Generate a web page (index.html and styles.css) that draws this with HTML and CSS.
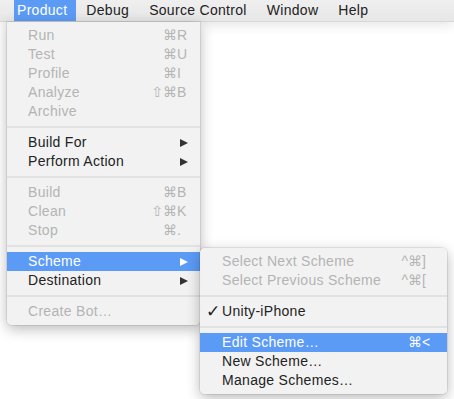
FILE: index.html
```html
<!DOCTYPE html>
<html lang="en">
<head>
    <meta charset="UTF-8">
    <title>Xcode Product Menu</title>
    <link rel="stylesheet" href="styles.css">
</head>
<body>
    <div class="menubar">
        <span class="bar-item first active">Product</span>
        <span class="bar-item">Debug</span>
        <span class="bar-item">Source Control</span>
        <span class="bar-item">Window</span>
        <span class="bar-item">Help</span>
    </div>

<div class="menus">
    <div class="menu main-menu">
        <div class="item disabled"><span class="label">Run</span><span class="keys"><span class="mods">⌘</span><span class="key">R</span></span></div>
        <div class="item disabled"><span class="label">Test</span><span class="keys"><span class="mods">⌘</span><span class="key">U</span></span></div>
        <div class="item disabled"><span class="label">Profile</span><span class="keys"><span class="mods">⌘</span><span class="key">I</span></span></div>
        <div class="item disabled"><span class="label">Analyze</span><span class="keys"><span class="mods">⇧⌘</span><span class="key">B</span></span></div>
        <div class="item disabled"><span class="label">Archive</span></div>
        <div class="separator"></div>
        <div class="item"><span class="label">Build For</span><span class="arrow"></span></div>
        <div class="item"><span class="label">Perform Action</span><span class="arrow"></span></div>
        <div class="separator"></div>
        <div class="item disabled"><span class="label">Build</span><span class="keys"><span class="mods">⌘</span><span class="key">B</span></span></div>
        <div class="item disabled"><span class="label">Clean</span><span class="keys"><span class="mods">⇧⌘</span><span class="key">K</span></span></div>
        <div class="item disabled"><span class="label">Stop</span><span class="keys"><span class="mods">⌘</span><span class="key">.</span></span></div>
        <div class="separator"></div>
        <div class="item selected"><span class="label">Scheme</span><span class="arrow"></span></div>
        <div class="item"><span class="label">Destination</span><span class="arrow"></span></div>
        <div class="separator"></div>
        <div class="item disabled"><span class="label">Create Bot…</span></div>
    </div>

    <div class="menu submenu">
        <div class="item disabled"><span class="label">Select Next Scheme</span><span class="keys"><span class="mods">^⌘</span><span class="key">]</span></span></div>
        <div class="item disabled"><span class="label">Select Previous Scheme</span><span class="keys"><span class="mods">^⌘</span><span class="key">[</span></span></div>
        <div class="separator"></div>
        <div class="item"><span class="check">✓</span><span class="label">Unity-iPhone</span></div>
        <div class="separator"></div>
        <div class="item selected"><span class="label">Edit Scheme…</span><span class="keys"><span class="mods">⌘</span><span class="key">&lt;</span></span></div>
        <div class="item"><span class="label">New Scheme…</span></div>
        <div class="item"><span class="label">Manage Schemes…</span></div>
    </div>
</div>

</body>
</html>
```

FILE: styles.css
```css
body {
    margin: 0;
    height: 399px;
    overflow: hidden;
    background: white;
    font-family: "Liberation Sans", Arial, "DejaVu Sans", sans-serif;
    font-size: 14px;
    letter-spacing: 0.3px;
    color: #222;
}
.menubar {
    display: flex;
    height: 22px;
    line-height: 21px;
    padding-left: 14px;
    background: linear-gradient(180deg, #efefef, #e7e7e7);
    border-bottom: 1px solid #d8d8d8;
    box-sizing: border-box;
    box-shadow: 0 2px 14px rgba(0, 0, 0, 0.12);
    position: relative;
    z-index: 1;
}
.bar-item {
    padding: 0 10px;
}
.bar-item.first {
    padding-left: 3px;
    padding-right: 9px;
}
.bar-item.active {
    background: #5b9bf6;
    color: white;
}
.menus {
    display: flex;
    align-items: flex-start;
    padding-left: 7px;
    position: relative;
    z-index: 2;
}
.menu {
    background: rgba(242, 242, 242, 0.98);
    padding: 4px 0;
    box-shadow: 0 4px 14px rgba(0, 0, 0, 0.28), 0 0 0 1px rgba(0, 0, 0, 0.08);
}
.main-menu {
    width: 193px;
    border-radius: 0 0 5px 5px;
}
.submenu {
    width: 247px;
    margin-top: 226px;
    border-radius: 5px;
    position: relative;
    z-index: 3;
}
.item {
    display: flex;
    align-items: center;
    height: 19px;
    line-height: 19px;
    padding: 0 12px 0 21px;
    position: relative;
}
.submenu .item {
    padding: 0 14px 0 22px;
}
.item .label {
    flex: 1;
    white-space: nowrap;
}
.item.disabled {
    color: #b4b4b4;
}
.item.selected {
    background: #5b9bf6;
    color: white;
}
.keys {
    display: flex;
    letter-spacing: 0;
}
.mods {
    text-align: right;
}
.key {
    width: 11px;
}
.check {
    position: absolute;
    left: 6px;
    top: 0;
    font-family: "DejaVu Sans", sans-serif;
    font-size: 17px;
}
.arrow {
    width: 0;
    height: 0;
    border-left: 8px solid #333;
    border-top: 4.5px solid transparent;
    border-bottom: 4.5px solid transparent;
}
.selected .arrow {
    border-left-color: white;
}
.separator {
    height: 2px;
    margin: 5px 0;
    background: #e2e2e2;
}
```
